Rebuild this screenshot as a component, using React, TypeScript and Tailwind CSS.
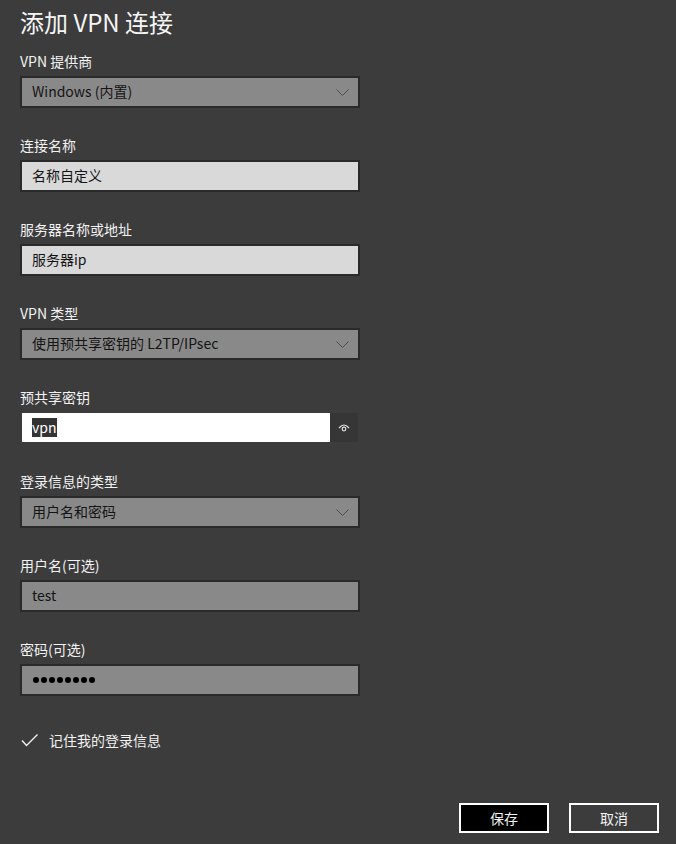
import { ReactNode } from 'react';

const font = { fontFamily: '"Noto Sans CJK SC", "Noto Sans", sans-serif' };

function Chevron() {
  return (
    <svg width="13" height="7" viewBox="0 0 13 7" className="mr-[9px] mt-[2px]">
      <polyline points="0.5,0.5 6.5,6.5 12.5,0.5" fill="none" stroke="#4d4d4d" strokeWidth="1" />
    </svg>
  );
}

function Field({ label, children }: { label: string; children: ReactNode }) {
  return (
    <div className="mb-[28px]">
      <div className="h-5 mb-1 text-[14px] leading-[18px] text-[#f2f2f2]">{label}</div>
      {children}
    </div>
  );
}

function Select({ value }: { value: string }) {
  return (
    <div className="w-[340px] h-8 border-2 border-[#2a2a2a] bg-[#898989] flex items-center justify-between pl-[10px] pb-[2px]">
      <span className="text-[14px] text-[#141414]">{value}</span>
      <Chevron />
    </div>
  );
}

function TextBox({ value, light }: { value: string; light?: boolean }) {
  return (
    <div
      className={
        'w-[340px] h-8 border-2 border-[#2a2a2a] flex items-center pl-[10px] pb-[2px] ' +
        (light ? 'bg-[#d9d9d9]' : 'bg-[#898989]')
      }
    >
      <span className="text-[14px] text-[#141414]">{value}</span>
    </div>
  );
}

export default function App() {
  return (
    <div style={font} className="w-[676px] h-[844px] bg-[#3c3c3c] px-5 pt-[6px] overflow-hidden">
      <h1 className="h-8 mb-[14px] text-[24px] leading-8 text-[#f5f5f5]">添加 VPN 连接</h1>

      <Field label="VPN 提供商">
        <Select value="Windows (内置)" />
      </Field>

      <Field label="连接名称">
        <TextBox value="名称自定义" light />
      </Field>

      <Field label="服务器名称或地址">
        <TextBox value="服务器ip" light />
      </Field>

      <Field label="VPN 类型">
        <Select value="使用预共享密钥的 L2TP/IPsec" />
      </Field>

      <Field label="预共享密钥">
        <div className="h-8 flex items-start pt-px">
          <div className="ml-[2px] w-[308px] h-[29px] bg-white flex items-center pl-[10px] pb-px">
            <span className="text-[14px] leading-[19px] bg-[#333333] text-white">vpn</span>
          </div>
          <div className="w-[28px] h-[29px] bg-[#363636] flex items-center justify-center">
            <svg width="12" height="9" viewBox="0 0 12 9">
              <path d="M1 5 Q6 -1 11 5" fill="none" stroke="#e0e0e0" strokeWidth="1.2" />
              <circle cx="6" cy="6" r="1.8" fill="none" stroke="#e0e0e0" strokeWidth="1.2" />
            </svg>
          </div>
        </div>
      </Field>

      <Field label="登录信息的类型">
        <Select value="用户名和密码" />
      </Field>

      <Field label="用户名(可选)">
        <TextBox value="test" />
      </Field>

      <Field label="密码(可选)">
        <div className="w-[340px] h-8 border-2 border-[#2a2a2a] bg-[#898989] flex items-center gap-[2px] pl-[11px]">
          {Array.from({ length: 8 }).map((_, i) => (
            <span key={i} className="w-[6px] h-[6px] rounded-full bg-black" />
          ))}
        </div>
      </Field>

      <div className="mt-[34px] h-5 flex items-center gap-[10px]">
        <svg width="18" height="14" viewBox="0 0 18 14" className="ml-[1px]">
          <polyline points="1,7.5 5.5,12.5 16.5,1.5" fill="none" stroke="#f2f2f2" strokeWidth="1.4" />
        </svg>
        <span className="text-[14px] text-[#f2f2f2]">记住我的登录信息</span>
      </div>

      <div className="mt-[53px] flex justify-end gap-[20px] -mr-[3px]">
        <button className="w-[90px] h-[30px] border-2 border-white bg-black text-[14px] text-[#f2f2f2]">保存</button>
        <button className="w-[90px] h-[30px] border-2 border-white bg-transparent text-[14px] text-[#f2f2f2]">取消</button>
      </div>
    </div>
  );
}
